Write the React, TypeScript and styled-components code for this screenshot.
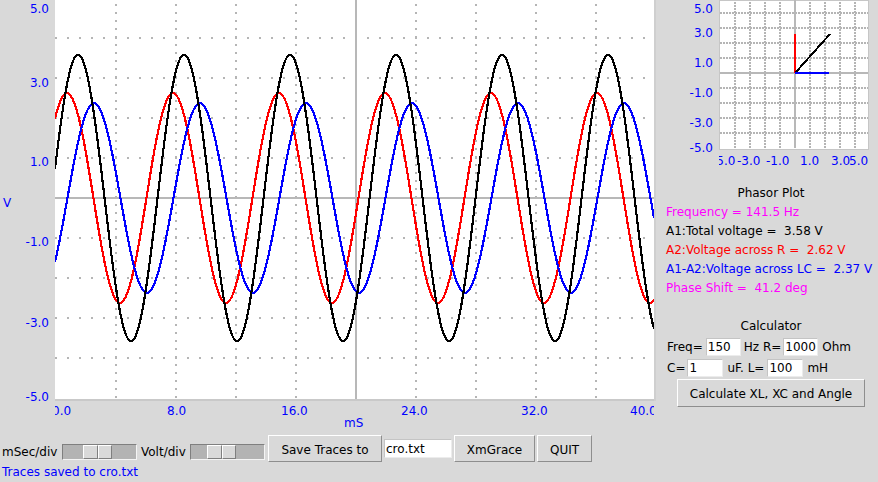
import React from "react";
import styled, { createGlobalStyle } from "styled-components";

const GlobalStyle = createGlobalStyle`
  html, body {
    margin: 0;
    padding: 0;
    background: #d9d9d9;
  }
  body {
    font-family: "DejaVu Sans", "Liberation Sans", sans-serif;
    font-size: 12px;
    color: #000;
  }
`;

// scope scale: 15 px per mS, 40 px per volt
const OMEGA = (2 * Math.PI * 141.5) / 1000; // rad per mS
const toY = (v: number): number => 198 - 40 * v;

type Trace = { color: string; amp: number; peak: number };

const traces: Array<Trace> = [
    { color: "#ff0000", amp: 2.62, peak: 0.73 },
    { color: "#0000ff", amp: 2.37, peak: 2.53 },
    { color: "#000000", amp: 3.58, peak: 1.47 }
];

function tracePoints(tr: Trace): string {
    const pts: Array<string> = [];
    for (let x = 55; x <= 654; x++) {
        const t = (x - 56) / 15;
        const v = tr.amp * Math.cos(OMEGA * (t - tr.peak));
        pts.push(`${x},${toY(v).toFixed(1)}`);
    }
    return pts.join(" ");
}

const yLabels: Array<[string, number]> = [
    ["5.0", 12.7],
    ["3.0", 87],
    ["1.0", 166],
    ["-1.0", 246],
    ["-3.0", 327],
    ["-5.0", 401]
];

const xLabels: Array<[string, number]> = [
    ["0.0", 52],
    ["8.0", 167],
    ["16.0", 281],
    ["24.0", 401],
    ["32.0", 521],
    ["40.0", 630]
];

const phasorY: Array<[string, number]> = [
    ["5.0", 13],
    ["3.0", 37],
    ["1.0", 67],
    ["-1.0", 97],
    ["-3.0", 127],
    ["-5.0", 152]
];

const phasorX: Array<[string, number]> = [
    ["-5.0", 56],
    ["-3.0", 81],
    ["-1.0", 110],
    ["1.0", 144],
    ["3.0", 175],
    ["5.0", 193]
];

const Window = styled.div`
    width: 878px;
    height: 482px;
    overflow: hidden;
    display: flex;
    flex-direction: column;
    background: #d9d9d9;
`;

const TopRow = styled.div`
    display: flex;
    height: 434px;
`;

const ChartSvg = styled.svg`
    display: block;
    flex: none;
`;

const AxisText = styled.text`
    font-family: "DejaVu Sans", sans-serif;
    font-size: 12px;
    fill: #0000ff;
`;

const GridLine = styled.line<{ $dash: string }>`
    stroke: #b5b5b5;
    stroke-width: 2;
    stroke-dasharray: ${(p) => p.$dash};
`;

const AxisLine = styled.line`
    stroke: #b8b8b8;
    stroke-width: 2;
`;

const SidePanel = styled.div`
    width: 222px;
    display: flex;
    flex-direction: column;
`;

const Title = styled.div<{ $lh: number }>`
    padding-left: 8px;
    text-align: center;
    line-height: ${(p) => p.$lh}px;
`;

const InfoLine = styled.div<{ $color: string }>`
    padding-left: 10px;
    line-height: 19px;
    white-space: pre;
    color: ${(p) => p.$color};
`;

const Calculator = styled.div`
    margin-top: 18px;
    display: flex;
    flex-direction: column;
`;

const CalcRow = styled.div`
    height: 21px;
    display: flex;
    align-items: center;
    padding-left: 11px;
    white-space: pre;
`;

const Entry = styled.input<{ $w: number; $h: number; $ml: number }>`
    box-sizing: border-box;
    width: ${(p) => p.$w}px;
    height: ${(p) => p.$h}px;
    margin: 0 0 0 ${(p) => p.$ml}px;
    padding: 0 1px;
    border: 1px solid;
    border-color: #c4c4c4 #ececec #ececec #c4c4c4;
    background: #fff;
    font-family: "DejaVu Sans", sans-serif;
    font-size: 12px;
    color: #000;
    outline: none;
`;

const CalcText = styled.span<{ $ml: number }>`
    margin-left: ${(p) => p.$ml}px;
`;

const TkButton = styled.button<{ $w: number; $h: number; $ml: number }>`
    box-sizing: border-box;
    width: ${(p) => p.$w}px;
    height: ${(p) => p.$h}px;
    margin: 0 0 0 ${(p) => p.$ml}px;
    padding: 2px 0 0;
    border: 1px solid;
    border-color: #ffffff #8e8e8e #8e8e8e #ffffff;
    background: #d9d9d9;
    font-family: "DejaVu Sans", sans-serif;
    font-size: 12px;
    color: #000;
    white-space: nowrap;
`;

const CalcButton = styled(TkButton)`
    margin-top: 1px;
    align-self: flex-start;
`;

const ControlRow = styled.div`
    height: 29px;
    display: flex;
    align-items: center;
    padding-left: 2px;
`;

const CtlLabel = styled.span<{ $w: number; $ml: number }>`
    width: ${(p) => p.$w}px;
    margin: 7px 0 0 ${(p) => p.$ml}px;
    line-height: 14px;
    white-space: nowrap;
`;

const Trough = styled.div`
    box-sizing: border-box;
    width: 75px;
    height: 16px;
    margin-top: 7px;
    display: flex;
    background: #b3b3b3;
    border: 1px solid;
    border-color: #7f7f7f #f4f4f4 #f4f4f4 #7f7f7f;
`;

const Knob = styled.div<{ $pos: number }>`
    width: 29px;
    margin-left: ${(p) => p.$pos}px;
    display: flex;
`;

const KnobHalf = styled.div`
    flex: 1;
    box-sizing: border-box;
    background: #d9d9d9;
    border: 1px solid;
    border-color: #ffffff #7f7f7f #7f7f7f #ffffff;
`;

const Status = styled.div`
    padding-left: 2px;
    line-height: 19px;
    color: #0000ff;
`;

function Slider({ pos }: { pos: number }): JSX.Element {
    return (
        <Trough>
            <Knob $pos={pos}>
                <KnobHalf />
                <KnobHalf />
            </Knob>
        </Trough>
    );
}

function ScopeChart(): JSX.Element {
    const hGrid = [38, 78, 118, 158, 238, 278, 318, 358];
    const vGrid = [116, 176, 236, 296, 416, 476, 536, 596];
    return (
        <ChartSvg width={656} height={434} viewBox="0 0 656 434">
            <defs>
                <clipPath id="plotClip">
                    <rect x={55} y={0} width={599} height={399} />
                </clipPath>
                <clipPath id="xLabClip">
                    <rect x={55} y={402} width={599} height={20} />
                </clipPath>
            </defs>
            <rect x={55} y={0} width={599} height={399} fill="#ffffff" />
            <rect x={55} y={399} width={601} height={2} fill="#c9c9c9" />
            <rect x={654} y={0} width={2} height={401} fill="#cfcfcf" />
            {hGrid.map((y) => (
                <GridLine key={`h${y}`} x1={55} x2={654} y1={y} y2={y} $dash="2 10" />
            ))}
            {vGrid.map((x) => (
                <GridLine key={`v${x}`} x1={x} x2={x} y1={4} y2={399} $dash="2 6" />
            ))}
            <AxisLine x1={55} x2={654} y1={198} y2={198} />
            <AxisLine x1={356} x2={356} y1={0} y2={399} />
            <g clipPath="url(#plotClip)">
                {traces.map((tr) => (
                    <polyline
                        key={tr.color}
                        points={tracePoints(tr)}
                        fill="none"
                        stroke={tr.color}
                        strokeWidth={2.2}
                        shapeRendering="crispEdges"
                    />
                ))}
            </g>
            {yLabels.map(([txt, y]) => (
                <AxisText key={txt} x={49} y={y} textAnchor="end">
                    {txt}
                </AxisText>
            ))}
            <g clipPath="url(#xLabClip)">
                {xLabels.map(([txt, x]) => (
                    <AxisText key={txt} x={x} y={415}>
                        {txt}
                    </AxisText>
                ))}
            </g>
            <AxisText x={3} y={207}>
                V
            </AxisText>
            <AxisText x={344} y={427}>
                mS
            </AxisText>
        </ChartSvg>
    );
}

function PhasorChart(): JSX.Element {
    const grid = [13, 28, 43, 58, 88, 103, 118, 133];
    const vGrid = [79, 94, 109, 124, 154, 169, 184, 199];
    return (
        <ChartSvg width={222} height={184} viewBox="0 0 222 184">
            <defs>
                <clipPath id="phasorLab">
                    <rect x={63} y={152} width={149} height={18} />
                </clipPath>
            </defs>
            <rect x={63.5} y={0.5} width={149} height={149} fill="#ffffff" stroke="#c6c6c6" />
            {grid.map((y) => (
                <GridLine key={`h${y}`} x1={64} x2={212} y1={y} y2={y} $dash="2 1" />
            ))}
            {vGrid.map((x) => (
                <GridLine key={`v${x}`} x1={x} x2={x} y1={2} y2={148} $dash="2 1" />
            ))}
            <AxisLine x1={64} x2={212} y1={73} y2={73} />
            <AxisLine x1={139} x2={139} y1={0} y2={148} />
            <line x1={139} x2={139} y1={73} y2={34} stroke="#ff0000" strokeWidth={2} />
            <line x1={139} x2={173} y1={73} y2={73} stroke="#0000ff" strokeWidth={2} />
            <line
                x1={140}
                x2={174}
                y1={72}
                y2={34}
                stroke="#000000"
                strokeWidth={2}
                shapeRendering="crispEdges"
            />
            {phasorY.map(([txt, y]) => (
                <AxisText key={txt} x={57} y={y} textAnchor="end">
                    {txt}
                </AxisText>
            ))}
            <g clipPath="url(#phasorLab)">
                {phasorX.map(([txt, x]) => (
                    <AxisText key={txt} x={x} y={165}>
                        {txt}
                    </AxisText>
                ))}
            </g>
        </ChartSvg>
    );
}

export default function App(): JSX.Element {
    return (
        <Window>
            <GlobalStyle />
            <TopRow>
                <ScopeChart />
                <SidePanel>
                    <PhasorChart />
                    <Title $lh={19}>Phasor Plot</Title>
                    <InfoLine $color="#ff00ff">Frequency = 141.5 Hz</InfoLine>
                    <InfoLine $color="#000000">A1:Total voltage =  3.58 V</InfoLine>
                    <InfoLine $color="#ff0000">A2:Voltage across R =  2.62 V</InfoLine>
                    <InfoLine $color="#0000ff">A1-A2:Voltage across LC =  2.37 V</InfoLine>
                    <InfoLine $color="#ff00ff">Phase Shift =  41.2 deg</InfoLine>
                    <Calculator>
                        <Title $lh={20}>Calculator</Title>
                        <CalcRow>
                            <CalcText $ml={0}>Freq=</CalcText>
                            <Entry $w={35} $h={18} $ml={3} defaultValue="150" />
                            <CalcText $ml={3}>Hz R=</CalcText>
                            <Entry $w={35} $h={18} $ml={2} defaultValue="1000" />
                            <CalcText $ml={4}>Ohm</CalcText>
                        </CalcRow>
                        <CalcRow>
                            <CalcText $ml={0}>C=</CalcText>
                            <Entry $w={36} $h={18} $ml={2} defaultValue="1" />
                            <CalcText $ml={4}>uF. L=</CalcText>
                            <Entry $w={36} $h={18} $ml={3} defaultValue="100" />
                            <CalcText $ml={4}>mH</CalcText>
                        </CalcRow>
                        <CalcButton $w={188} $h={28} $ml={21}>
                            Calculate XL, XC and Angle
                        </CalcButton>
                    </Calculator>
                </SidePanel>
            </TopRow>
            <ControlRow>
                <CtlLabel $w={60} $ml={0}>mSec/div</CtlLabel>
                <Slider pos={20} />
                <CtlLabel $w={49} $ml={4}>Volt/div</CtlLabel>
                <Slider pos={16} />
                <TkButton $w={114} $h={27} $ml={3}>
                    Save Traces to
                </TkButton>
                <Entry $w={68} $h={19} $ml={2} defaultValue="cro.txt" />
                <TkButton $w={81} $h={27} $ml={2}>
                    XmGrace
                </TkButton>
                <TkButton $w={55} $h={27} $ml={2}>
                    QUIT
                </TkButton>
            </ControlRow>
            <Status>Traces saved to cro.txt</Status>
        </Window>
    );
}
